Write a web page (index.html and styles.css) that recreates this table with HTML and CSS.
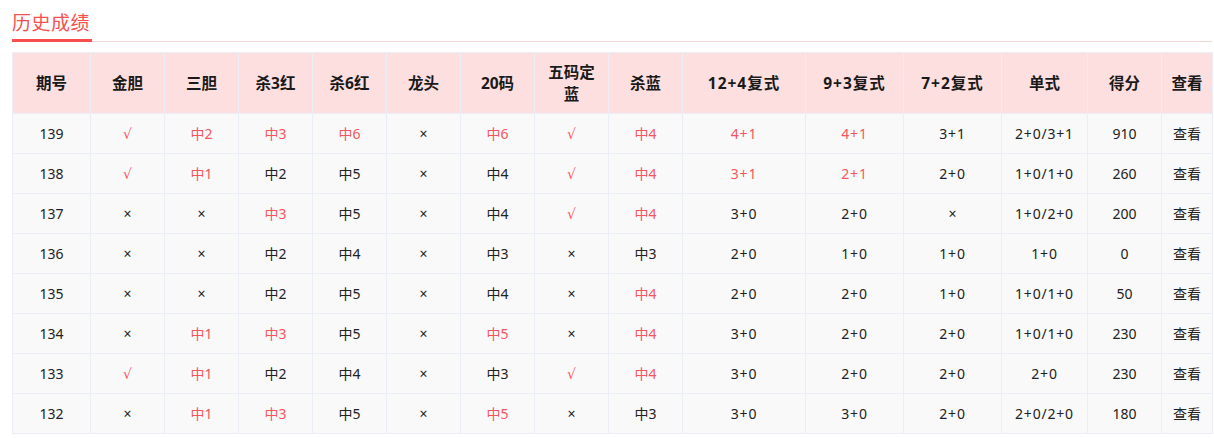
FILE: index.html
```html
<!DOCTYPE html>
<html lang="zh-CN">
<head>
<meta charset="utf-8">
<title>历史成绩</title>
<link rel="stylesheet" href="styles.css">
</head>
<body>
<div class="page">
  <div class="tabs">
    <div class="tab">历史成绩</div>
  </div>
  <table class="grid">
    <colgroup>
      <col class="c-no"><col class="c-s"><col class="c-s"><col class="c-s"><col class="c-s"><col class="c-s"><col class="c-s"><col class="c-s"><col class="c-s">
      <col class="c-12"><col class="c-9"><col class="c-9"><col class="c-dan"><col class="c-s"><col class="c-view">
    </colgroup>
    <thead>
      <tr>
        <th>期号</th><th>金胆</th><th>三胆</th><th>杀3红</th><th>杀6红</th><th>龙头</th><th>20码</th><th>五码定蓝</th><th>杀蓝</th><th class="wide">12+4复式</th><th class="wide">9+3复式</th><th class="wide">7+2复式</th><th>单式</th><th>得分</th><th>查看</th>
      </tr>
    </thead>
    <tbody>
      <tr><td>139</td><td class="r">√</td><td class="r">中2</td><td class="r">中3</td><td class="r">中6</td><td>×</td><td class="r">中6</td><td class="r">√</td><td class="r">中4</td><td class="r p">4+1</td><td class="r p">4+1</td><td class="p">3+1</td><td class="p">2+0/3+1</td><td>910</td><td>查看</td></tr>
      <tr><td>138</td><td class="r">√</td><td class="r">中1</td><td>中2</td><td>中5</td><td>×</td><td>中4</td><td class="r">√</td><td class="r">中4</td><td class="r p">3+1</td><td class="r p">2+1</td><td class="p">2+0</td><td class="p">1+0/1+0</td><td>260</td><td>查看</td></tr>
      <tr><td>137</td><td>×</td><td>×</td><td class="r">中3</td><td>中5</td><td>×</td><td>中4</td><td class="r">√</td><td class="r">中4</td><td class="p">3+0</td><td class="p">2+0</td><td>×</td><td class="p">1+0/2+0</td><td>200</td><td>查看</td></tr>
      <tr><td>136</td><td>×</td><td>×</td><td>中2</td><td>中4</td><td>×</td><td>中3</td><td>×</td><td>中3</td><td class="p">2+0</td><td class="p">1+0</td><td class="p">1+0</td><td class="p">1+0</td><td>0</td><td>查看</td></tr>
      <tr><td>135</td><td>×</td><td>×</td><td>中2</td><td>中5</td><td>×</td><td>中4</td><td>×</td><td class="r">中4</td><td class="p">2+0</td><td class="p">2+0</td><td class="p">1+0</td><td class="p">1+0/1+0</td><td>50</td><td>查看</td></tr>
      <tr><td>134</td><td>×</td><td class="r">中1</td><td class="r">中3</td><td>中5</td><td>×</td><td class="r">中5</td><td>×</td><td class="r">中4</td><td class="p">3+0</td><td class="p">2+0</td><td class="p">2+0</td><td class="p">1+0/1+0</td><td>230</td><td>查看</td></tr>
      <tr><td>133</td><td class="r">√</td><td class="r">中1</td><td>中2</td><td>中4</td><td>×</td><td>中3</td><td class="r">√</td><td class="r">中4</td><td class="p">3+0</td><td class="p">2+0</td><td class="p">2+0</td><td class="p">2+0</td><td>230</td><td>查看</td></tr>
      <tr><td>132</td><td>×</td><td class="r">中1</td><td class="r">中3</td><td>中5</td><td>×</td><td class="r">中5</td><td>×</td><td>中3</td><td class="p">3+0</td><td class="p">3+0</td><td class="p">2+0</td><td class="p">2+0/2+0</td><td>180</td><td>查看</td></tr>
    </tbody>
  </table>
</div>
</body>
</html>
```
FILE: styles.css
```css
html, body {
  margin: 0;
  padding: 0;
  background: #ffffff;
}
body {
  font-family: "Noto Sans", "DejaVu Sans", "Noto Sans CJK SC", sans-serif;
  color: #303133;
}
.page {
  padding: 0 2px 0 12px;
}
.tabs {
  border-bottom: 1px solid #f3d6d6;
  height: 41px;
  display: flex;
  align-items: flex-end;
}
.tab {
  color: #f5524f;
  font-size: 19px;
  line-height: 26px;
  padding-bottom: 3px;
  border-bottom: 3px solid #f84e4e;
  margin-bottom: -1px;
  width: 80px;
  letter-spacing: 0.5px;
  white-space: nowrap;
}
.grid {
  margin-top: 10px;
  width: 1200px;
  table-layout: fixed;
  border-collapse: collapse;
  font-size: 14px;
}
.c-no { width: 78px; }
.c-s { width: 74px; }
.c-12 { width: 123px; }
.c-9 { width: 98px; }
.c-dan { width: 86px; }
.c-view { width: 51px; }
.grid th,
.grid td {
  border: 1px solid #ebeef5;
  text-align: center;
  vertical-align: middle;
  padding: 0 10px;
}
.grid th {
  background: #fddfe0;
  color: #1a1a1a;
  font-weight: bold;
  font-size: 15.5px;
  line-height: 22px;
  height: 61px;
  box-sizing: border-box;
  padding-top: 8px;
  padding-bottom: 8px;
}
.grid th.wide {
  letter-spacing: 1px;
}
.grid th:last-child,
.grid td:last-child {
  padding: 0 2px;
}
.grid td {
  background: #f9f9f9;
  height: 40px;
  box-sizing: border-box;
  line-height: 20px;
  color: #222222;
}
.grid td.p {
  letter-spacing: 0.8px;
}
.grid td.r {
  color: #f5565e;
}
```
